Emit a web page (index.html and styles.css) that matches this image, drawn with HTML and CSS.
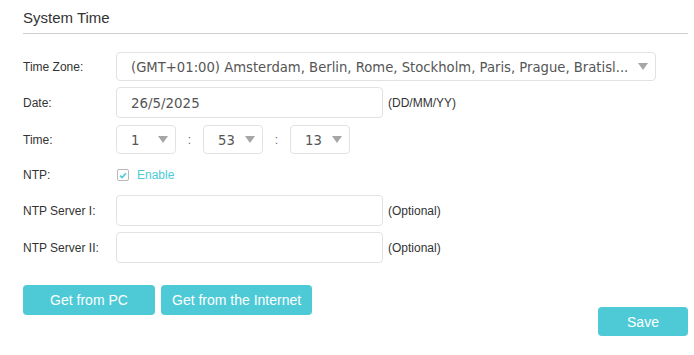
FILE: index.html
```html
<!DOCTYPE html>
<html lang="en">
<head>
    <meta charset="UTF-8">
    <meta name="viewport" content="width=device-width, initial-scale=1.0">
    <title>System Time</title>
    <link rel="stylesheet" href="styles.css">
</head>
<body>
    <div class="panel">
        <h2 class="panel-title">System Time</h2>

        <div class="form">
            <div class="row">
                <label class="row-label">Time Zone:</label>
                <div class="combo combo-wide">
                    <span class="combo-text">(GMT+01:00) Amsterdam, Berlin, Rome, Stockholm, Paris, Prague, Bratisl...</span>
                    <span class="combo-arrow"></span>
                </div>
            </div>

            <div class="row">
                <label class="row-label">Date:</label>
                <input type="text" class="text-field" value="26/5/2025">
                <span class="hint">(DD/MM/YY)</span>
            </div>

            <div class="row row-time">
                <label class="row-label">Time:</label>
                <div class="combo combo-small">
                    <span class="combo-text">1</span>
                    <span class="combo-arrow"></span>
                </div>
                <span class="colon">:</span>
                <div class="combo combo-small">
                    <span class="combo-text">53</span>
                    <span class="combo-arrow"></span>
                </div>
                <span class="colon">:</span>
                <div class="combo combo-small">
                    <span class="combo-text">13</span>
                    <span class="combo-arrow"></span>
                </div>
            </div>

            <div class="row row-ntp">
                <label class="row-label">NTP:</label>
                <label class="check">
                    <span class="check-box">
                        <svg width="8" height="7" viewBox="0 0 8 7"><path d="M1 3.6 L3.1 5.6 L7 1.2" fill="none" stroke="#4acbd6" stroke-width="1.6"/></svg>
                    </span>
                    <span class="check-text">Enable</span>
                </label>
            </div>

            <div class="row">
                <label class="row-label">NTP Server I:</label>
                <input type="text" class="text-field" value="">
                <span class="hint">(Optional)</span>
            </div>

            <div class="row">
                <label class="row-label">NTP Server II:</label>
                <input type="text" class="text-field" value="">
                <span class="hint">(Optional)</span>
            </div>
        </div>

        <div class="actions">
            <div class="action-group">
                <button class="btn">Get from PC</button>
                <button class="btn">Get from the Internet</button>
            </div>
            <button class="btn btn-save">Save</button>
        </div>
    </div>
</body>
</html>
```

FILE: styles.css
```css
* {
    margin: 0;
    padding: 0;
    box-sizing: border-box;
}

body {
    background: white;
    font-family: 'Liberation Sans', Arial, sans-serif;
    color: #333;
}

.panel {
    padding: 0 6px 0 23px;
}

.panel-title {
    font-size: 15px;
    font-weight: normal;
    line-height: 17px;
    color: #333;
    padding: 9px 0 7px;
    border-bottom: 1px solid #cfcfcf;
}

.form {
    margin-top: 18px;
    display: flex;
    flex-direction: column;
    gap: 6px;
}

.row {
    display: flex;
    align-items: center;
}

.row-label {
    width: 93px;
    flex-shrink: 0;
    font-size: 12px;
    color: #333;
}

.combo {
    position: relative;
    height: 29px;
    border: 1px solid #e2e2e2;
    border-radius: 4px;
    background: white;
    display: flex;
    align-items: center;
    padding: 0 17px 0 14px;
    font-family: 'DejaVu Sans', Verdana, sans-serif;
    font-size: 13.2px;
    color: #555;
}

.combo-wide {
    width: 540px;
}

.combo-small {
    width: 60px;
}

.row-time {
    margin-top: 1px;
}

.combo-text {
    white-space: nowrap;
    overflow: hidden;
    text-overflow: ellipsis;
    padding-top: 2px;
}

.combo-arrow {
    position: absolute;
    right: 7px;
    top: 50%;
    margin-top: -4px;
    width: 0;
    height: 0;
    border-left: 5px solid transparent;
    border-right: 5px solid transparent;
    border-top: 7px solid #a6a6a6;
}

.colon {
    width: 27px;
    text-align: center;
    font-size: 12px;
    color: #666;
}

.text-field {
    width: 267px;
    height: 31px;
    border: 1px solid #e2e2e2;
    border-radius: 4px;
    padding: 2px 14px 0;
    font-family: 'DejaVu Sans', Verdana, sans-serif;
    font-size: 13.4px;
    color: #555;
    outline: none;
}

.hint {
    margin-left: 5px;
    font-size: 12px;
    color: #333;
}

.row-ntp {
    height: 29px;
}

.check {
    display: flex;
    align-items: center;
    margin-left: 1px;
}

.check-box {
    width: 12px;
    height: 12px;
    border: 1px solid #b8b8b8;
    border-radius: 2px;
    display: flex;
    align-items: center;
    justify-content: center;
    margin-top: 1px;
}

.check-text {
    margin-left: 8px;
    font-size: 12px;
    color: #4acbd6;
}

.actions {
    margin-top: 22px;
    display: flex;
    justify-content: space-between;
    align-items: flex-start;
}

.action-group {
    display: flex;
    gap: 6px;
}

.btn {
    min-width: 132px;
    height: 30px;
    padding: 0 11px;
    border: none;
    border-radius: 4px;
    background: #4dcad6;
    color: white;
    font-family: 'Liberation Sans', Arial, sans-serif;
    font-size: 14px;
    cursor: pointer;
}

.btn-save {
    min-width: 90px;
    height: 29px;
    margin-top: 22px;
}
```
